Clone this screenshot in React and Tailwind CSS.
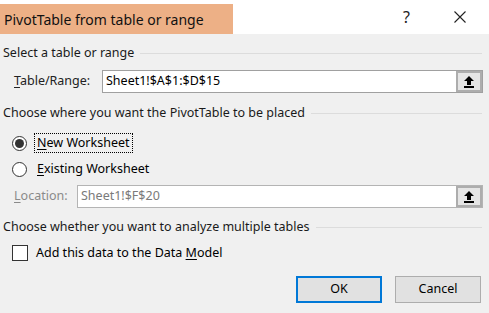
function PickerButton() {
    return (
        <div className="w-[26px] h-full bg-[#e5e5e5] border-2 border-[#adadad] flex items-center justify-center">
            <svg width="12" height="14" viewBox="0 0 12 14">
                <path d="M6 1 L11 6 L8 6 L8 10 L4 10 L4 6 L1 6 Z" fill="#000" />
                <rect x="1" y="11" width="10" height="2" fill="#000" />
            </svg>
        </div>
    );
}

function SectionHeader({ text }) {
    return (
        <div className="flex items-center h-[18px] pl-[3px] pr-[7px]">
            <span className="text-[#1a1a1a] whitespace-nowrap">{text}</span>
            <div className="flex-1 ml-[6px] border-t border-[#dcdcdc]" />
        </div>
    );
}

function Radio({ checked }) {
    return (
        <div className="w-[15px] h-[15px] rounded-full border border-[#333] bg-white flex items-center justify-center">
            {checked && <div className="w-[9px] h-[9px] rounded-full bg-[#333]" />}
        </div>
    );
}

export default function App() {
    return (
        <div
            className="w-[489px] h-[313px] bg-[#f0f0f0] text-[12.5px] text-black overflow-hidden"
            style={{ fontFamily: '"Noto Sans", "Open Sans", sans-serif' }}
        >
            {/* Title bar */}
            <div className="bg-white h-[34px] pt-[4px] flex">
                <div className="w-[233px] h-[30px] bg-[#edb086] flex items-center pl-[4px] text-[14px] text-[#111]">
                    PivotTable from table or range
                </div>
                <div className="flex-1 flex items-center justify-end pr-[23px] -mt-[4px]">
                    <span className="text-[16px] mr-[44px] text-[#222]">?</span>
                    <svg width="12" height="12" viewBox="0 0 12 12">
                        <path d="M0.5 0.5 L11.5 11.5 M11.5 0.5 L0.5 11.5" stroke="#222" strokeWidth="1.1" />
                    </svg>
                </div>
            </div>

            {/* Body */}
            <div className="pt-[10px]">
                <SectionHeader text="Select a table or range" />

                <div className="flex items-center h-[23px] mt-[8px] pl-[14px] pr-[6px]">
                    <span className="w-[88px] text-[#222]">
                        <span className="underline underline-offset-2">T</span>able/Range:
                    </span>
                    <div className="flex-1 h-full flex bg-white border border-[#a0a0a0]">
                        <div className="flex-1 flex items-center pl-[3px] text-black">Sheet1!$A$1:$D$15</div>
                        <PickerButton />
                    </div>
                </div>

                <div className="mt-[11px]">
                    <SectionHeader text="Choose where you want the PivotTable to be placed" />
                </div>

                <div className="flex items-center h-[20px] mt-[11px] pl-[12px]">
                    <Radio checked />
                    <div className="ml-[7px] px-[2px] h-full flex items-center border border-dotted border-black">
                        <span className="underline underline-offset-2">N</span>ew Worksheet
                    </div>
                </div>

                <div className="flex items-center h-[20px] mt-[6px] pl-[12px]">
                    <Radio />
                    <div className="ml-[10px]">
                        <span className="underline underline-offset-2">E</span>xisting Worksheet
                    </div>
                </div>

                <div className="flex items-center h-[23px] mt-[6px] pl-[14px] pr-[6px]">
                    <span className="w-[63px] text-[#8a8a8a]">
                        <span className="underline underline-offset-2">L</span>ocation:
                    </span>
                    <div className="flex-1 h-full flex bg-white border border-[#b4b4b4]">
                        <div className="flex-1 flex items-center pl-[3px] text-[#7a7a7a]">Sheet1!$F$20</div>
                        <PickerButton />
                    </div>
                </div>

                <div className="mt-[10px]">
                    <SectionHeader text="Choose whether you want to analyze multiple tables" />
                </div>

                <div className="flex items-center h-[20px] mt-[7px] pl-[12px]">
                    <div className="w-[16px] h-[16px] border border-[#333] bg-white" />
                    <div className="ml-[8px]">
                        Add this data to the Data <span className="underline underline-offset-2">M</span>odel
                    </div>
                </div>

                {/* Buttons */}
                <div className="flex justify-end gap-[13px] mt-[13px] pr-[8px]">
                    <button className="w-[86px] h-[27px] bg-[#e1e1e1] border-2 border-[#0078d7]">OK</button>
                    <button className="w-[86px] h-[27px] bg-[#e1e1e1] border border-[#adadad]">Cancel</button>
                </div>
            </div>
        </div>
    );
}
